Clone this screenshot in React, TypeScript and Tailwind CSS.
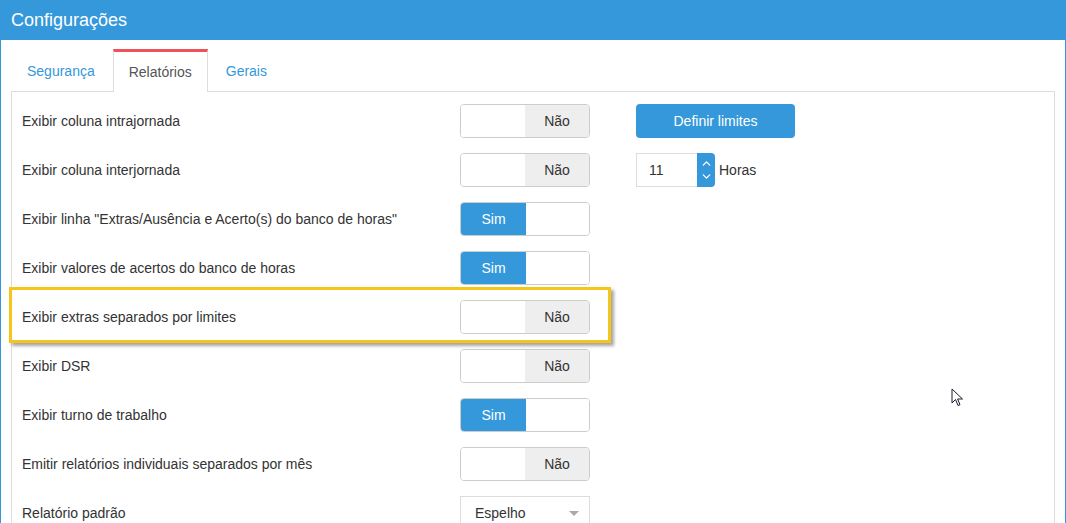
import { ChevronDown, ChevronUp } from 'lucide-react';

type Row = { label: string; value: boolean | 'select'; extra?: 'button' | 'number' };

const rows: Row[] = [
  { label: 'Exibir coluna intrajornada', value: false, extra: 'button' },
  { label: 'Exibir coluna interjornada', value: false, extra: 'number' },
  { label: 'Exibir linha "Extras/Ausência e Acerto(s) do banco de horas"', value: true },
  { label: 'Exibir valores de acertos do banco de horas', value: true },
  { label: 'Exibir extras separados por limites', value: false },
  { label: 'Exibir DSR', value: false },
  { label: 'Exibir turno de trabalho', value: true },
  { label: 'Emitir relatórios individuais separados por mês', value: false },
  { label: 'Relatório padrão', value: 'select' },
];

function Toggle({ on }: { on: boolean }) {
  return (
    <div className="flex h-[34px] w-[130px] overflow-hidden rounded-[4px] border border-[#cccccc] text-[14px]">
      {on ? (
        <>
          <div className="flex w-[65px] items-center justify-center bg-[#3498db] text-white">Sim</div>
          <div className="flex-1 bg-white" />
        </>
      ) : (
        <>
          <div className="w-[64px] bg-white" />
          <div className="flex flex-1 items-center justify-center bg-[#eeeeee] text-[#333333]">Não</div>
        </>
      )}
    </div>
  );
}

function Select() {
  return (
    <div className="flex h-[34px] w-[130px] items-center justify-between border border-[#dddddd] pl-[14px] pr-[10px] text-[14px] text-[#333333]">
      <span>Espelho</span>
      <span className="h-0 w-0 border-x-[5px] border-t-[5px] border-x-transparent border-t-[#aaaaaa]" />
    </div>
  );
}

function NumberInput() {
  return (
    <div className="flex items-center">
      <div className="flex h-[34px] w-[61px] items-center border border-r-0 border-[#dddddd] pl-[12px] text-[14px] text-[#333333]">
        11
      </div>
      <div className="flex h-[34px] w-[18px] flex-col items-center justify-center rounded-r-[4px] bg-[#3498db] text-white">
        <ChevronUp className="h-[13px] w-[13px]" strokeWidth={2.5} />
        <ChevronDown className="h-[13px] w-[13px]" strokeWidth={2.5} />
      </div>
      <span className="ml-[4px] text-[14px] text-[#333333]">Horas</span>
    </div>
  );
}

export default function App() {
  return (
    <div
      className="relative h-[523px] overflow-hidden border-x border-[#3498db] bg-white"
      style={{ fontFamily: '"Liberation Sans", Arial, sans-serif' }}
    >
      <div className="flex h-[40px] items-center bg-[#3498db] pl-[10px] text-[18px] text-white">Configurações</div>

      <div className="px-[10px] pt-[9px]">
        <div className="flex h-[43px] border-b border-[#dddddd] pl-[1px] text-[14px]">
          <div className="flex items-center pl-[15px] pr-[18px] pt-[2px] text-[#3498db]">Segurança</div>
          <div className="-mb-px flex items-center border-x border-t-[3px] border-[#dddddd] border-t-[#f0505a] bg-white px-[15px] text-[#555555]">
            Relatórios
          </div>
          <div className="flex items-center px-[18px] pt-[2px] text-[#3498db]">Gerais</div>
        </div>

        <div className="h-[500px] border-x border-[#dddddd] pl-[10px] pt-[12px]">
          {rows.map((r, i) => (
            <div key={i} className="mb-[15px] flex h-[34px] items-center text-[14px] text-[#333333]">
              <div className="w-[438px]">{r.label}</div>
              {r.value === 'select' ? <Select /> : <Toggle on={r.value} />}
              {r.extra === 'button' && (
                <button className="ml-[46px] h-[34px] w-[159px] rounded-[4px] bg-[#3498db] text-[14px] text-white">
                  Definir limites
                </button>
              )}
              {r.extra === 'number' && (
                <div className="ml-[46px]">
                  <NumberInput />
                </div>
              )}
            </div>
          ))}
        </div>
      </div>

      {/* highlight annotation */}
      <div className="pointer-events-none absolute left-[8px] top-[287px] h-[56px] w-[602px] border-[3px] border-[#f5c518] shadow-[3px_3px_3px_rgba(0,0,0,0.35)]" />

      {/* mouse cursor */}
      <svg className="absolute left-[950px] top-[388px]" width="14" height="20" viewBox="0 0 14 20">
        <path d="M1 1 L1 15 L4.5 11.5 L7 17.5 L9 16.7 L6.6 11 L11.5 11 Z" fill="white" stroke="#1a1a2a" strokeWidth="1" strokeLinejoin="round" />
      </svg>
    </div>
  );
}
